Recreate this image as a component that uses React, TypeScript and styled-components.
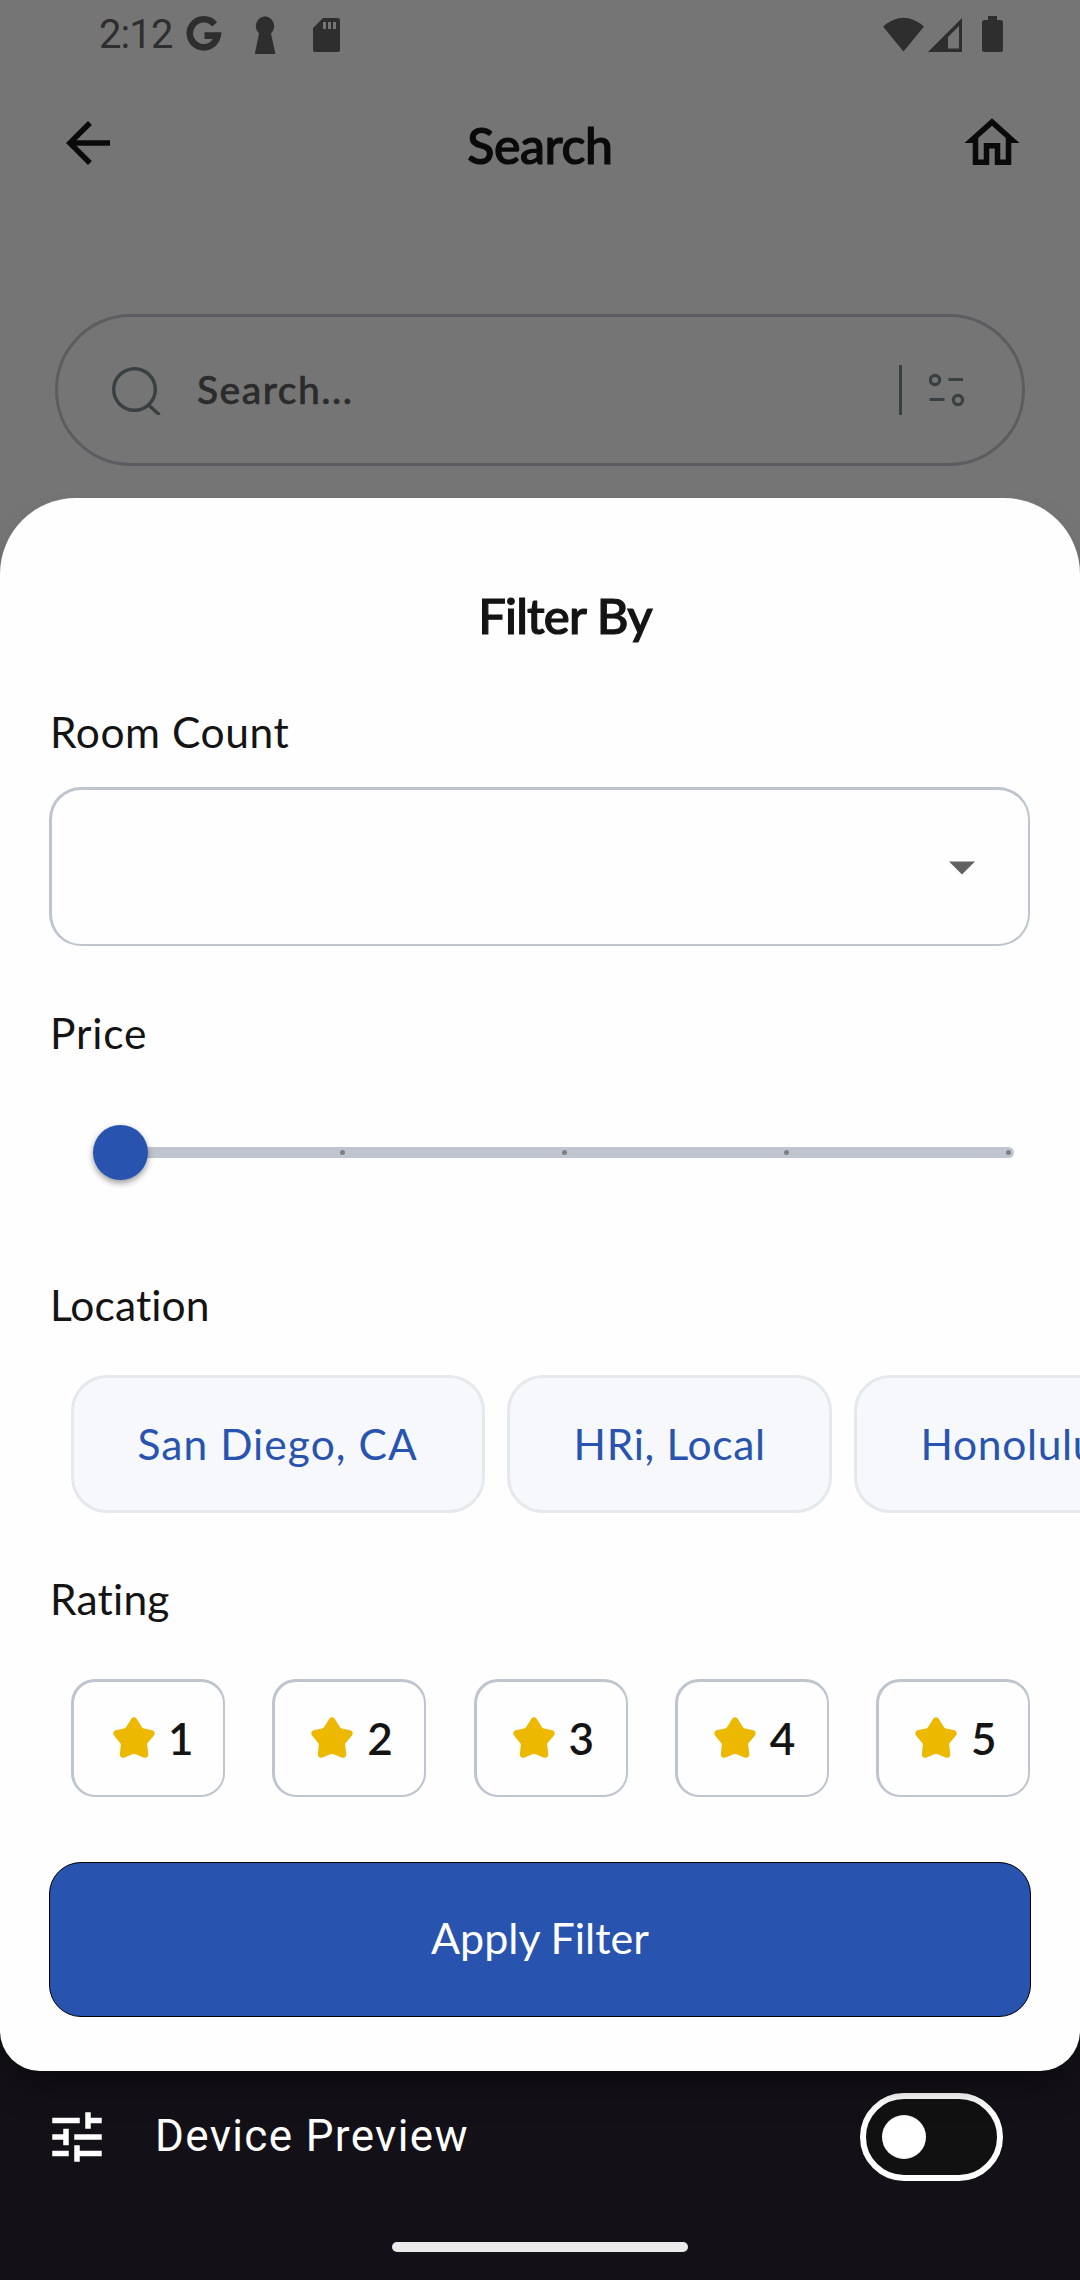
import React from "react";
import styled, { createGlobalStyle } from "styled-components";

const colors = {
  scrim: "#757575",
  dark: "#131117",
  ink: "#141414",
  line: "#bfc5ce",
  blue: "#2853af",
  gold: "#ecb800",
  status: "#2e2e2e",
  hint: "#384042",
};

const GlobalStyle = createGlobalStyle`
  * { box-sizing: border-box; }
  body { margin: 0; background: ${colors.dark}; }
`;

const Screen = styled.div`
  width: 1080px;
  height: 2280px;
  overflow: hidden;
  display: flex;
  flex-direction: column;
  font-family: Lato, "Open Sans", sans-serif;
  color: ${colors.ink};
  background: linear-gradient(${colors.scrim} 0 1990px, ${colors.dark} 1990px);
`;

const Svg = styled.svg`
  display: block;
  flex: none;
`;

const StatusBar = styled.div`
  height: 70px;
  padding: 0 77px 0 99px;
  display: flex;
  align-items: center;
  color: ${colors.status};
`;

const Clock = styled.span`
  width: 87px;
  font: 400 40px/66px Roboto, sans-serif;
  letter-spacing: -0.9px;
`;

const StatusIcons = styled.div<{ $end?: boolean }>`
  display: flex;
  align-items: center;
  ${(p) => p.$end && "margin-left: auto;"}
`;

const AppBar = styled.header`
  height: 146px;
  padding: 0 55px;
  display: flex;
  align-items: center;
  justify-content: space-between;
  color: #0a0a0a;
`;

const AppTitle = styled.h1`
  margin: 4px 0 0;
  font-size: 50px;
  line-height: 60px;
  font-weight: 500;
  letter-spacing: -0.4px;
  -webkit-text-stroke: 1.2px currentColor;
`;

const SearchField = styled.div`
  height: 152px;
  margin: 98px 55px 32px;
  padding: 0 57px 0 54px;
  border: 3px solid #5c5d61;
  border-radius: 76px;
  display: flex;
  align-items: center;
  color: ${colors.hint};
`;

const Placeholder = styled.span`
  margin: 0 auto 3px 35px;
  font-size: 39px;
  line-height: 48px;
  font-weight: 500;
  letter-spacing: 1.5px;
  color: #2b2b2b;
  -webkit-text-stroke: 0.6px currentColor;
`;

const Divider = styled.span`
  width: 3px;
  height: 50px;
  margin-right: 27px;
  background: ${colors.hint};
`;

const Sheet = styled.main`
  position: relative;
  z-index: 1;
  height: 1573px;
  padding: 87px 49px 54px;
  display: flex;
  flex-direction: column;
  flex: none;
  background: #fefefe;
  border-radius: 76px 76px 40px 40px;
  box-shadow: 0 22px 36px -14px rgba(0, 0, 0, 0.55);
`;

const SheetTitle = styled.h2`
  margin: 0 0 0 50px;
  text-align: center;
  font-size: 49px;
  line-height: 60px;
  font-weight: 500;
  letter-spacing: -0.8px;
  -webkit-text-stroke: 1.2px currentColor;
`;

const Label = styled.h3<{ $top: number; $spacing: number }>`
  margin: ${(p) => p.$top}px 0 0 1px;
  padding-top: 1px;
  height: 58px;
  font-size: 42.5px;
  line-height: 58px;
  font-weight: 400;
  letter-spacing: ${(p) => p.$spacing}px;
`;

const Select = styled.div`
  height: 159px;
  margin: 27px 1px 0 0;
  padding: 2px 53px 0 0;
  display: flex;
  align-items: center;
  justify-content: flex-end;
  border: solid ${colors.line};
  border-width: 3px 2px 2px 3px;
  border-radius: 32px;
`;

const Slider = styled.div`
  height: 55px;
  margin: 64px 17px 0 44px;
  display: flex;
  align-items: center;
`;

const Thumb = styled.div`
  z-index: 1;
  width: 55px;
  height: 55px;
  flex: none;
  border-radius: 50%;
  background: ${colors.blue};
  box-shadow: 0 3px 6px rgba(0, 0, 0, 0.4);
`;

const Track = styled.div`
  flex: 1;
  height: 11px;
  margin-left: -10px;
  padding: 0 3px 0 202px;
  display: flex;
  align-items: center;
  justify-content: space-between;
  border-radius: 0 6px 6px 0;
  background: ${colors.line};
`;

const Tick = styled.span`
  width: 5px;
  height: 5px;
  border-radius: 50%;
  background: #7d8086;
`;

const Chips = styled.div`
  display: flex;
  gap: 22px;
  margin: 42px -49px 0 22px;
  overflow: hidden;
`;

const Chip = styled.div<{ $width: number; $spacing: number }>`
  flex: none;
  width: ${(p) => p.$width}px;
  height: 138px;
  padding: 0 0 2px 63.5px;
  display: flex;
  align-items: center;
  white-space: nowrap;
  border: 3px solid #e6e9ec;
  border-radius: 36px;
  background: #f6f8fb;
  color: ${colors.blue};
  font-size: 42.5px;
  letter-spacing: ${(p) => p.$spacing}px;
`;

const Ratings = styled.div`
  margin: 52px 1px 0 22px;
  display: flex;
  justify-content: space-between;
`;

const RatingBox = styled.div<{ $narrow: boolean }>`
  width: 154px;
  height: 118px;
  padding: 0 0 2px ${(p) => (p.$narrow ? 39 : 36)}px;
  display: flex;
  align-items: center;
  gap: ${(p) => (p.$narrow ? 13 : 14)}px;
  border: solid ${colors.line};
  border-width: 3px 2px 2px 3px;
  border-radius: 24px;
  font-size: 44px;
  font-weight: 600;
`;

const ApplyButton = styled.button`
  height: 155px;
  margin: 65px 0 0;
  padding: 0 0 3px;
  border: 1px solid #000;
  border-radius: 32px;
  background: ${colors.blue};
  color: #fff;
  font: 400 43px/58px Lato, sans-serif;
  letter-spacing: 0;
`;

const Preview = styled.footer`
  height: 133px;
  padding: 0 77px 2px 44px;
  display: flex;
  align-items: center;
  color: #fff;
`;

const PreviewLabel = styled.span`
  margin: 0 auto 2px 45px;
  font: 400 44px/60px Roboto, sans-serif;
  letter-spacing: 1.35px;
`;

const Toggle = styled.div`
  width: 143px;
  height: 88px;
  padding-left: 16px;
  display: flex;
  align-items: center;
  border: 6px solid #fff;
  border-radius: 44px;
  background: #111;
`;

const Knob = styled.span`
  width: 44px;
  height: 44px;
  border-radius: 50%;
  background: #fff;
`;

const HomeIndicator = styled.div`
  width: 296px;
  height: 10px;
  margin: 38px auto 0;
  border-radius: 5px;
  background: #ebebeb;
`;

const Star = () => (
  <Svg width="42" height="42" viewBox="0 0 42 42" fill={colors.gold}>
    <path d="M18.5 1.6Q21-1 23.5 1.6L29 10.2Q29.6 11 31 11.4L39.5 13.2Q43 15 41 18.4L34.6 26Q34 27 34.2 28.2L35.4 37.4Q34.5 41.5 30.5 40.6L22.6 37.2Q21 36.6 19.4 37.2L11.5 40.6Q7.5 41.5 6.8 37.4L7.8 28.2Q8 27 7.2 26L1 18.4Q-1 15 2.5 13.2L11 11.4Q12.4 11 13 10.2Z" />
  </Svg>
);

const locations = [
  { name: "San Diego, CA", width: 414, spacing: 1.05 },
  { name: "HRi, Local", width: 325, spacing: 0.7 },
  { name: "Honolulu, HI", width: 380, spacing: 0.7 },
];

export default function App() {
  return (
    <Screen>
      <GlobalStyle />
      <StatusBar>
        <Clock>2:12</Clock>
        <StatusIcons>
          <Svg width="154" height="40" viewBox="186 15 154 40" fill="currentColor">
            <path d="M214.6 24.4A14 14 0 1 0 217.6 35.6H204.5" fill="none" stroke="currentColor" strokeWidth="6.6" />
            <path d="M265 16.2a10 10 0 0 1 6 17.2L275.4 54h-20.6L259 33.4a10 10 0 0 1 6-17.2Z" />
            <path fillRule="evenodd" d="M323 18h14.500q2.500 0 2.500 2.500v29q0 2.500-2.500 2.500H315.500q-2.500 0-2.500-2.500V28ZM323 22v7h3v-7Zm5 0v7h3v-7Zm5 0v7h3v-7Z" />
          </Svg>
        </StatusIcons>
        <StatusIcons $end>
          <Svg width="121" height="40" viewBox="882 15 121 40" fill="currentColor">
            <path d="M883 26.500Q903.500 9 924 26.500L903.500 51.500Z" />
            <path fillRule="evenodd" d="M962 18V52H928ZM959 26L948 37V48.500H959Z" />
            <path d="M988 16h9v4h3.500q2.500 0 2.500 2.500v27q0 2.500-2.500 2.500h-16q-2.500 0-2.500-2.500v-27q0-2.500 2.500-2.500H988Z" />
          </Svg>
        </StatusIcons>
      </StatusBar>

      <AppBar>
        <Svg width="66" height="66" viewBox="0 0 24 24" fill="currentColor">
          <path d="M20 11H7.830l5.590-5.590L12 4l-8 8 8 8 1.410-1.410L7.830 13H20v-2z" />
        </Svg>
        <AppTitle>Search</AppTitle>
        <Svg width="66" height="66" viewBox="0 0 24 24" fill="currentColor">
          <path d="M12 5.690l5 4.500V18h-2v-6H9v6H7v-7.810l5-4.500M12 3L2 12h3v8h6v-6h2v6h6v-8h3L12 3z" />
        </Svg>
      </AppBar>

      <SearchField>
        <Svg width="50" height="50" viewBox="112.500 365 50 50" fill="none" stroke="currentColor" strokeWidth="3.400">
          <circle cx="135" cy="389.500" r="20.800" />
          <path d="M149 405L159 414" strokeLinecap="round" />
        </Svg>
        <Placeholder>Search...</Placeholder>
        <Divider />
        <Svg width="36" height="36" viewBox="929 372 36 36" fill="none" stroke="currentColor" strokeWidth="3.200">
          <circle cx="935" cy="380" r="4.600" />
          <path d="M948.500 379.500H963M929.500 399.500H944.500" />
          <circle cx="958" cy="400" r="4.600" />
        </Svg>
      </SearchField>

      <Sheet>
        <SheetTitle>Filter By</SheetTitle>

        <Label $top={57} $spacing={0.55}>Room Count</Label>
        <Select>
          <Svg width="26" height="14" viewBox="0 0 26 14" fill="#616161">
            <path d="M0 0.500H26L13 13.500Z" />
          </Svg>
        </Select>

        <Label $top={57} $spacing={0.8}>Price</Label>
        <Slider>
          <Thumb />
          <Track>
            <Tick />
            <Tick />
            <Tick />
            <Tick />
          </Track>
        </Slider>

        <Label $top={95} $spacing={0.1}>Location</Label>
        <Chips>
          {locations.map((l) => (
            <Chip key={l.name} $width={l.width} $spacing={l.spacing}>
              {l.name}
            </Chip>
          ))}
        </Chips>

        <Label $top={56} $spacing={0.2}>Rating</Label>
        <Ratings>
          {[1, 2, 3, 4, 5].map((n) => (
            <RatingBox key={n} $narrow={n === 1}>
              <Star />
              {n}
            </RatingBox>
          ))}
        </Ratings>

        <ApplyButton>Apply Filter</ApplyButton>
      </Sheet>

      <Preview>
        <Svg width="66" height="66" viewBox="0 0 24 24" fill="currentColor">
          <path d="M3 17v2h6v-2H3zM3 5v2h10V5H3zm10 16v-2h8v-2h-8v-2h-2v6h2zM7 9v2H3v2h4v2h2V9H7zm14 4v-2H11v2h10zm-6-4h2V7h4V5h-4V3h-2v6z" />
        </Svg>
        <PreviewLabel>Device Preview</PreviewLabel>
        <Toggle>
          <Knob />
        </Toggle>
      </Preview>
      <HomeIndicator />
    </Screen>
  );
}
